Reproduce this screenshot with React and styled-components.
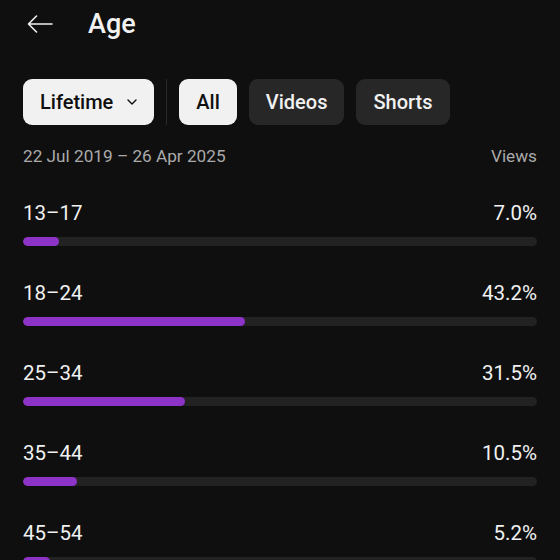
import React from "react";
import styled, { createGlobalStyle } from "styled-components";

const GlobalStyle = createGlobalStyle`
  html, body {
    margin: 0;
    padding: 0;
    background: #0f0f0f;
  }
  body {
    font-family: Roboto, "Noto Sans", "Liberation Sans", sans-serif;
    color: #f1f1f1;
  }
`;

const Page = styled.div`
  width: 560px;
  height: 560px;
  overflow: hidden;
  background: #0f0f0f;
  padding: 0 23px;
  box-sizing: border-box;
`;

const Header = styled.div`
  display: flex;
  align-items: center;
  height: 48px;
`;

const BackButton = styled.div`
  display: flex;
  align-items: center;
  margin-left: 4px;
  width: 28px;
  color: #f1f1f1;
`;

const Title = styled.h1`
  margin: 0 0 0 33px;
  font-size: 27px;
  font-weight: 500;
  color: #f1f1f1;
`;

const ChipRow = styled.div`
  display: flex;
  align-items: center;
  gap: 12px;
  margin-top: 31px;
`;

const Chip = styled.div`
  display: flex;
  align-items: center;
  gap: 14px;
  height: 46px;
  padding: 0 17px;
  border-radius: 9px;
  font-size: 20px;
  font-weight: 500;
  box-sizing: border-box;
  background: ${(p) => (p.$active ? "#f1f1f1" : "#272727")};
  color: ${(p) => (p.$active ? "#0f0f0f" : "#f1f1f1")};
`;

const Divider = styled.div`
  width: 1px;
  height: 46px;
  background: #2a2a2a;
`;

const MetaRow = styled.div`
  display: flex;
  justify-content: space-between;
  align-items: center;
  margin-top: 21px;
  height: 20px;
  font-size: 17.2px;
  color: #aaaaaa;
`;

const List = styled.div`
  margin-top: 35px;
`;

const Row = styled.div`
  height: 80px;
`;

const RowHead = styled.div`
  display: flex;
  justify-content: space-between;
  align-items: center;
  height: 24px;
  font-size: 20.5px;
  color: #f1f1f1;
`;

const Track = styled.div`
  margin-top: 12px;
  height: 9px;
  border-radius: 5px;
  background: #222222;
  overflow: hidden;
`;

const Fill = styled.div`
  height: 100%;
  border-radius: 5px;
  background: #8e33c8;
`;

const ages = [
  { label: "13–17", value: 7.0 },
  { label: "18–24", value: 43.2 },
  { label: "25–34", value: 31.5 },
  { label: "35–44", value: 10.5 },
  { label: "45–54", value: 5.2 },
];

export default function App() {
  return (
    <Page>
      <GlobalStyle />
      <Header>
        <BackButton>
          <svg width="26" height="18" viewBox="0 0 26 18" fill="none" stroke="currentColor" strokeWidth="1.6" strokeLinecap="round" strokeLinejoin="round">
            <path d="M25 9H1.5M9.5 1L1.5 9l8 8" />
          </svg>
        </BackButton>
        <Title>Age</Title>
      </Header>
      <ChipRow>
        <Chip $active>
          Lifetime
          <svg width="10" height="6" viewBox="0 0 10 6" fill="none" stroke="currentColor" strokeWidth="1.4" strokeLinecap="round" strokeLinejoin="round">
            <path d="M1 1l4 4 4-4" />
          </svg>
        </Chip>
        <Divider />
        <Chip $active>All</Chip>
        <Chip>Videos</Chip>
        <Chip>Shorts</Chip>
      </ChipRow>
      <MetaRow>
        <span>22 Jul 2019 – 26 Apr 2025</span>
        <span>Views</span>
      </MetaRow>
      <List>
        {ages.map((a) => (
          <Row key={a.label}>
            <RowHead>
              <span>{a.label}</span>
              <span>{a.value.toFixed(1)}%</span>
            </RowHead>
            <Track>
              <Fill style={{ width: `${a.value}%` }} />
            </Track>
          </Row>
        ))}
      </List>
    </Page>
  );
}
